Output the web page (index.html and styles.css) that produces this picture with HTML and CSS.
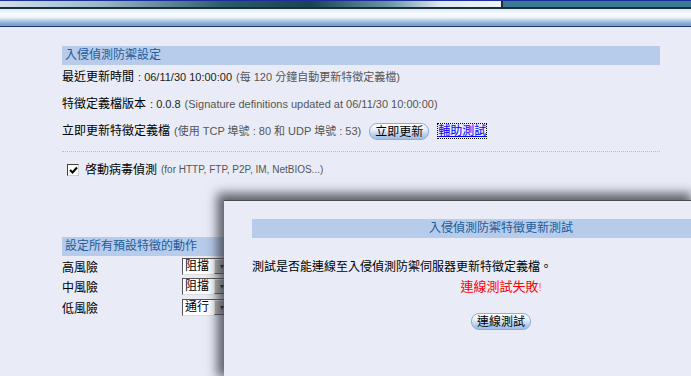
FILE: index.html
```html
<!DOCTYPE html>
<html lang="zh-Hant">
<head>
    <meta charset="UTF-8">
    <title>入侵偵測防禦</title>
    <link rel="stylesheet" href="styles.css">
</head>
<body>
    <!-- Top banner -->
    <div class="topbar">
        <div class="topbar-left"></div>
        <div class="topbar-right"></div>
    </div>
    <div class="subbar"></div>

    <div class="content">
        <div class="section-title">入侵偵測防禦設定</div>
        <div class="row first">最近更新時間 <span class="val">: 06/11/30 10:00:00</span> <span class="note">(每 120 分鐘自動更新特徵定義檔)</span></div>
        <div class="row">特徵定義檔版本 <span class="val">: 0.0.8</span> <span class="note">(Signature definitions updated at 06/11/30 10:00:00)</span></div>
        <div class="row">立即更新特徵定義檔 <span class="note">(使用 TCP 埠號 : 80 和 UDP 埠號 : 53)</span>
            <span class="btn btn-update">立即更新</span>
            <a class="help-link" href="#">輔助測試</a>
        </div>
        <div class="separator"></div>
        <div class="row check-row">
            <span class="checkbox"><svg width="9" height="9" viewBox="0 0 9 9"><path d="M1 4 L3.5 6.5 L8 1.5" fill="none" stroke="#000" stroke-width="2"/></svg></span>
            啓動病毒偵測 <span class="note small">(for HTTP, FTP, P2P, IM, NetBIOS...)</span>
        </div>

        <div class="section-title second">設定所有預設特徵的動作</div>
        <div class="action-row"><span class="action-label">高風險</span><span class="select"><span class="select-text">阻擋</span><span class="select-arrow">&#9662;</span></span></div>
        <div class="action-row"><span class="action-label">中風險</span><span class="select"><span class="select-text">阻擋</span><span class="select-arrow">&#9662;</span></span></div>
        <div class="action-row"><span class="action-label">低風險</span><span class="select"><span class="select-text">通行</span><span class="select-arrow">&#9662;</span></span></div>
    </div>

    <!-- Test popup window -->
    <div class="popup">
        <div class="popup-title centered">入侵偵測防禦特徵更新測試</div>
        <div class="popup-text">測試是否能連線至入侵偵測防禦伺服器更新特徵定義檔。</div>
        <div class="popup-result centered">連線測試失敗<span class="bang">!</span></div>
        <div class="popup-actions centered"><span class="btn">連線測試</span></div>
    </div>
</body>
</html>
```

FILE: styles.css
```css
* {
    margin: 0;
    padding: 0;
    box-sizing: border-box;
}

body {
    background: #e9ecf6;
    font-family: 'Liberation Sans', 'Noto Sans CJK TC', sans-serif;
    font-size: 12px;
    color: #000;
    width: 691px;
    height: 376px;
    overflow: hidden;
    position: relative;
}

/* Top banner */
.topbar {
    display: flex;
    height: 9px;
    border-top: 1px solid #1b2f9c;
    border-bottom: 2px solid #18303c;
}

.topbar-left {
    width: 503px;
    border-right: 2px solid #1c2c34;
    background: linear-gradient(to right, #d2deea 0%, #9ab8c8 20%, #2c5a6a 45%, #1a4252 62%, #6e98a8 78%, #dfe8f0 88%, #eef3f8 100%);
}

.topbar-right {
    flex: 1;
    background: #3b7996;
}

.subbar {
    height: 18px;
    background: linear-gradient(to bottom, #dce8f4 0%, #f8fbff 25%, #f4f8fc 45%, #b8d0e8 62%, #7ea4ca 85%, #7aa0c8 94%, #1c3a78 94%);
}

/* Main content */
.content {
    padding: 19px 0 0 62px;
    width: 660px;
}

.section-title {
    height: 19px;
    line-height: 19px;
    padding-left: 3px;
    background: #b7cbea;
    color: #1d5c9a;
    font-size: 12px;
}

.section-title.second {
    margin-top: 57px;
}

.row {
    height: 20px;
    line-height: 20px;
    margin-top: 7px;
    display: flex;
    align-items: center;
    gap: 4px;
    white-space: nowrap;
}

.row.first {
    margin-top: 2px;
}

.val {
    font-size: 11px;
    color: #222;
}

.note {
    font-size: 11px;
    color: #555;
}

.note.small {
    font-size: 10px;
}

.btn {
    display: inline-block;
    height: 17px;
    line-height: 16px;
    padding: 0 5px;
    border: 1px solid #8fadd4;
    border-radius: 8px;
    background: linear-gradient(to bottom, #ffffff 0%, #e4eefa 40%, #b4cced 75%, #a0bde6 100%);
    color: #000;
    font-size: 12px;
}

.btn-update {
    margin-left: 4px;
}

.help-link {
    color: #0000ff;
    text-decoration: underline;
    outline: 1px dotted #000;
    margin-left: 5px;
    line-height: 14px;
}

.separator {
    margin-top: 10px;
    border-top: 1px dotted #b6bdd6;
}

.check-row {
    margin-top: 8px;
    padding-left: 5px;
}

.checkbox {
    width: 12px;
    height: 12px;
    border: 1px solid #404040;
    border-right-color: #d0d0d0;
    border-bottom-color: #d0d0d0;
    background: #fff;
    display: flex;
    align-items: center;
    justify-content: center;
    margin-right: 2px;
}

/* Action rows */
.action-row {
    height: 20.5px;
    display: flex;
    align-items: center;
}

.action-label {
    width: 120px;
}

.select {
    display: flex;
    height: 17px;
    border: 1px solid #555;
    border-right-color: #ddd;
    border-bottom-color: #ddd;
    background: #fff;
}

.select-text {
    width: 31px;
    padding-left: 2px;
    line-height: 15px;
}

.select-arrow {
    width: 15px;
    background: #bdbdbd;
    border: 1px solid #eee;
    border-right-color: #555;
    border-bottom-color: #555;
    font-size: 8px;
    text-align: center;
    line-height: 13px;
}

/* Popup window (runs past the right edge of the viewport) */
.popup {
    position: absolute;
    left: 224px;
    top: 200px;
    width: 467px;
    height: 176px;
    background: #e9ecf6;
    border-top: 1px solid #4b4b4b;
    box-shadow: -3px -3px 10px 4px rgba(60, 64, 72, 0.8);
    padding: 18px 0 0 28px;
}

.popup .centered {
    padding-left: 59px;
}

.popup-title {
    height: 19px;
    line-height: 19px;
    background: #b7cbea;
    color: #1d5c9a;
    text-align: center;
}

.popup-text {
    margin-top: 19px;
    height: 20px;
    line-height: 20px;
}

.popup-result {
    height: 20px;
    line-height: 20px;
    text-align: center;
    color: #ff0000;
    font-size: 13px;
}

.bang {
    color: #ff6060;
    font-size: 11px;
}

.popup-actions {
    margin-top: 16px;
    text-align: center;
}
```
